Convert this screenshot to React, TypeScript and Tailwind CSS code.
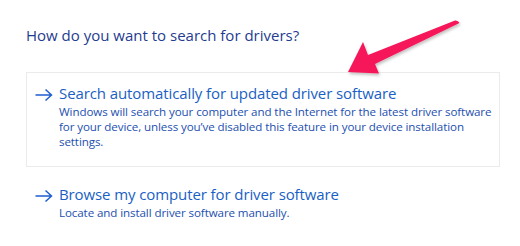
function ArrowGlyph() {
  return (
    <svg width="18" height="14" viewBox="0 0 18 14" className="mt-[6px] shrink-0">
      <path d="M0.5 7 H16.5 M10.5 1.5 L16.5 7 L10.5 12.5" fill="none" stroke="#1f5fcf" strokeWidth="1.5" />
    </svg>
  );
}

function Option({ title, desc, boxed }: { title: string; desc: string; boxed?: boolean }) {
  return (
    <div
      className={
        boxed
          ? 'flex gap-[6px] border border-[#ebebeb] pl-[8px] pr-[4px] pt-[9px] pb-[17px]'
          : 'flex gap-[6px] border border-transparent pl-[8px] pr-[4px] pt-[8px] pb-3'
      }
    >
      <ArrowGlyph />
      <div className="flex flex-col">
        <div className="text-[15px] leading-[22px] tracking-[-0.1px] text-[#1a5fc4]">{title}</div>
        <div className="text-[11.6px] leading-[15px] tracking-[-0.1px] text-[#1d4fb0]">{desc}</div>
      </div>
    </div>
  );
}

export default function App() {
  return (
    <div
      className="relative h-[246px] w-[520px] overflow-hidden bg-white pl-[26px] pr-[20px] pt-[24px]"
      style={{ fontFamily: '"Open Sans", "Noto Sans", sans-serif' }}
    >
      <h1 className="text-[15px] leading-[22px] text-[#1f3c8f]">How do you want to search for drivers?</h1>
      <div className="mt-[26px] flex flex-col gap-[7px]">
        <Option
          boxed
          title="Search automatically for updated driver software"
          desc="Windows will search your computer and the Internet for the latest driver software for your device, unless you’ve disabled this feature in your device installation settings."
        />
        <Option title="Browse my computer for driver software" desc="Locate and install driver software manually." />
      </div>
      <svg className="pointer-events-none absolute left-0 top-0" width="520" height="246">
        <defs>
          <filter id="sh" x="-20%" y="-20%" width="140%" height="140%">
            <feDropShadow dx="1" dy="2" stdDeviation="1.5" floodColor="#000" floodOpacity="0.25" />
          </filter>
        </defs>
        <path
          d="M455 20.5 Q458 20 459.5 23 L375 64 L379 73.5 L348 72 L363 42 L368 55 Z"
          fill="#f6175a"
          filter="url(#sh)"
        />
      </svg>
    </div>
  );
}
